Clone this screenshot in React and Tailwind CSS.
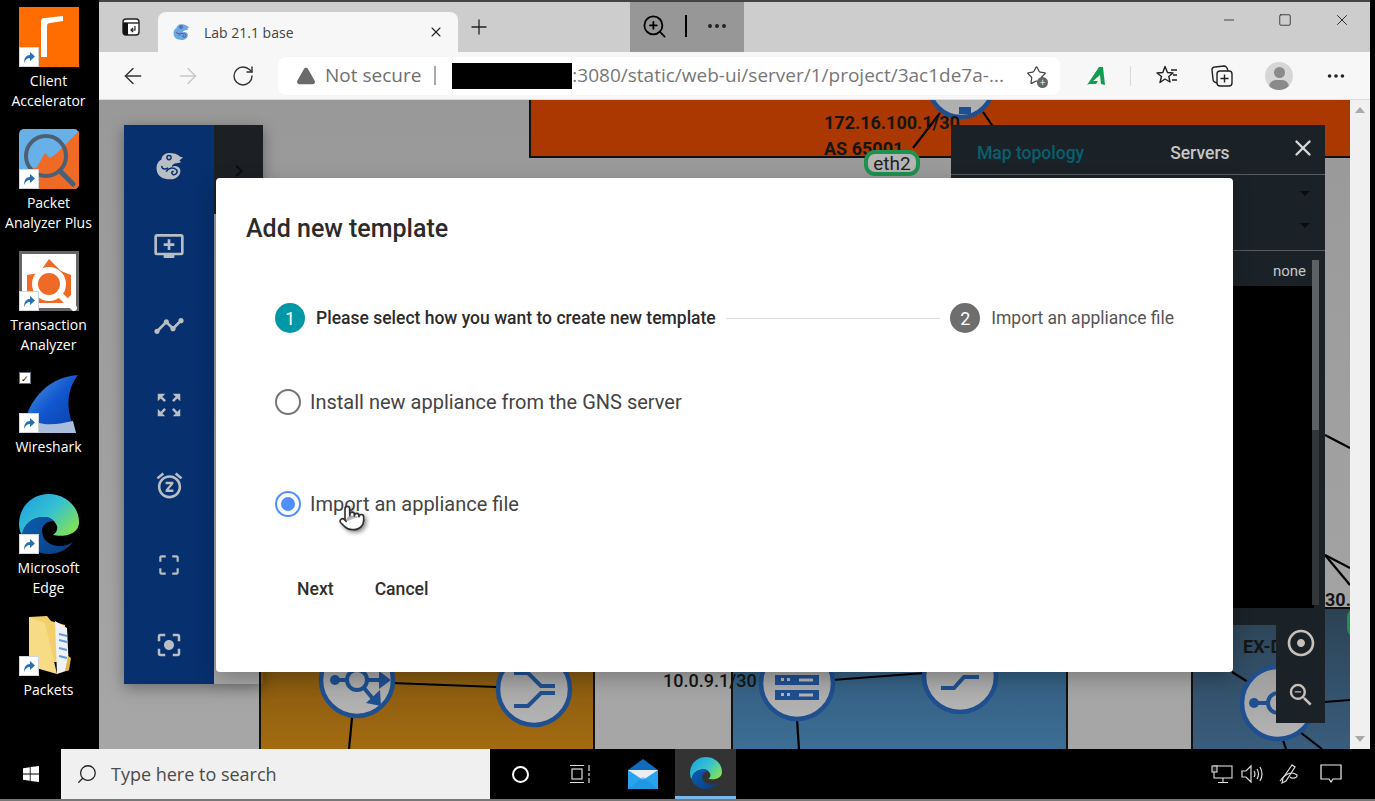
import React from 'react'
import { ArrowLeft, ArrowRight, RotateCw, X, Plus, ZoomIn, MoreHorizontal, Minus, Square, Search, Pointer, TriangleAlert, Star } from 'lucide-react'
import { MdAddToQueue, MdTimeline, MdZoomOutMap, MdSnooze, MdCropFree, MdCenterFocusStrong, MdAdjust, MdZoomOut, MdArrowDropDown, MdChevronRight } from 'react-icons/md'

function ShortcutBadge() {
  return (
    <div className="absolute left-0 bottom-0 w-5 h-5 bg-white border border-gray-300 flex items-center justify-center">
      <svg width="14" height="14" viewBox="0 0 14 14">
        <path d="M2 13 C2 8 4 5 8 5 L8 2 L13 6.5 L8 11 L8 8 C5 8 3 10 2 13 Z" fill="#2a6fb5" />
      </svg>
    </div>
  )
}

function EdgeLogo({ size }) {
  return (
    <svg width={size} height={size} viewBox="0 0 60 60">
      <defs>
        <linearGradient id={`edgeTop${size}`} x1="0" y1="0" x2="1" y2="0.7">
          <stop offset="0" stopColor="#1b9de2" />
          <stop offset="0.55" stopColor="#35c1d1" />
          <stop offset="1" stopColor="#7fe05a" />
        </linearGradient>
        <linearGradient id={`edgeLow${size}`} x1="0" y1="0" x2="1" y2="0.6">
          <stop offset="0" stopColor="#0a5eb0" />
          <stop offset="1" stopColor="#0b3f86" />
        </linearGradient>
      </defs>
      <path d="M30 0 C12 0 0 14 0 30 C0 34 1 38 3 42 C4 30 14 23 25 23 C32 23 36 27 38 32 C39 36 37 39 34 41 C42 43 60 42 60 28 C60 12 46 0 30 0 Z" fill={`url(#edgeTop${size})`} />
      <path d="M3 42 C4 30 14 23 25 23 C30 23 33 25 35 27 C28 27 23 31 23 37 C23 46 31 52 41 52 C46 52 51 50 54 48 C49 55 40 60 30 60 C18 60 7 53 3 42 Z" fill={`url(#edgeLow${size})`} />
    </svg>
  )
}

function Chameleon({ size, body, eye }) {
  return (
    <svg width={size} height={size} viewBox="0 0 32 32">
      <path d="M16 2 C21 2 25 3 28 6 L31 7 L27 10 L29 12 L24 13 C21 13 19 15 19 17 C22 15 27 16 28 20 C29 25 25 29 20 30 C12 31 4 28 3 21 C2 15 4 11 8 9 C8 5 12 2 16 2 Z" fill={body} />
      <circle cx="16" cy="7" r="3" fill={eye} />
      <circle cx="16" cy="7" r="1.4" fill={body} />
      <path d="M13 22 C15 18 20 17 24 20 C26 23 23 26 20 25 C18 24 19 21 21 22" fill="none" stroke={eye} strokeWidth="1.6" />
      <path d="M8 16 C9 20 12 20 15 18" fill="none" stroke={eye} strokeWidth="1.6" />
    </svg>
  )
}

function DesktopIcon({ lines, badge = true, check = false, children, className = 'h-[122px]' }) {
  return (
    <div className={`${className} flex flex-col items-center shrink-0`}>
      <div className="relative w-[60px] h-[60px]">
        {children}
        {badge && <ShortcutBadge />}
        {check && (
          <div className="absolute -left-0 -top-[1px] w-3 h-3 bg-white border border-gray-500 flex items-center justify-center text-[9px] leading-none text-black">✓</div>
        )}
      </div>
      <div className="mt-[4px] text-center text-white text-[14px] leading-5 whitespace-nowrap">
        {lines.map(l => <div key={l}>{l}</div>)}
      </div>
    </div>
  )
}

function Desktop() {
  return (
    <div className="w-[99px] shrink-0 bg-black pt-[7px] pr-[2px] flex flex-col font-['Open_Sans',sans-serif]">
      <DesktopIcon lines={['Client', 'Accelerator']}>
        <div className="w-[60px] h-[60px] bg-[#ff6d00] overflow-hidden">
          <svg width="60" height="60" viewBox="0 0 60 60">
            <path d="M22 50 L22 15 C22 12 23 11 26 11 L44 9 L44 14 L31 16 C29 16 28 17 28 19 L28 50 Z" fill="#fff" />
          </svg>
        </div>
      </DesktopIcon>
      <DesktopIcon lines={['Packet', 'Analyzer Plus']}>
        <svg width="60" height="60" viewBox="0 0 60 60">
          <rect width="60" height="60" rx="5" fill="#68b1e8" />
          <path d="M0 46 L18 38 L26 24 L31 29 L38 24 L60 2 L60 55 Q60 60 55 60 L5 60 Q0 60 0 55 Z" fill="#ee6a25" />
          <circle cx="27" cy="27" r="20" fill="none" stroke="#4d6073" strokeWidth="4" />
          <path d="M41 42 L54 55" stroke="#4d6073" strokeWidth="5" strokeLinecap="round" />
        </svg>
      </DesktopIcon>
      <DesktopIcon lines={['Transaction', 'Analyzer']}>
        <svg width="60" height="60" viewBox="0 0 60 60">
          <rect x="1.5" y="1.5" width="57" height="57" fill="#fff" stroke="#666" strokeWidth="3" />
          <path d="M8 52 L8 24 L20 22 L30 8 L42 20 L52 24 L52 44 L44 52 Z" fill="#ef6a27" />
          <circle cx="30" cy="33" r="14" fill="#ef6a27" stroke="#fff" strokeWidth="6" />
          <path d="M41 44 L55 57" stroke="#fff" strokeWidth="6" strokeLinecap="round" />
        </svg>
      </DesktopIcon>
      <DesktopIcon lines={['Wireshark']} check className="h-[121px]">
        <svg width="60" height="60" viewBox="0 0 60 60">
          <defs>
            <linearGradient id="fin" x1="0" y1="0" x2="1" y2="1">
              <stop offset="0" stopColor="#5aa0ee" />
              <stop offset="0.5" stopColor="#1157cf" />
              <stop offset="1" stopColor="#0a3da5" />
            </linearGradient>
          </defs>
          <path d="M4 60 C6 32 26 4 59 2 C48 16 46 36 56 56 L57 60 Z" fill="url(#fin)" />
          <path d="M20 50 C32 53 44 50 54 48 L57 60 L20 60 Z" fill="#a8bedc" />
        </svg>
      </DesktopIcon>
      <DesktopIcon lines={['Microsoft', 'Edge']}>
        <EdgeLogo size={60} />
      </DesktopIcon>
      <DesktopIcon lines={['Packets']} className="h-[80px]">
        <svg width="60" height="60" viewBox="0 0 60 60">
          <path d="M10 1 L28 0 L32 5 L46 9 L46 46 L10 46 Z" fill="#f2cf6b" />
          <path d="M36 5 L48 12 L50 54 L38 58 Z" fill="#eef2f6" />
          <path d="M40 18 L48 20 M40 24 L48 26 M40 32 L48 34 M40 40 L48 42" stroke="#5f9bd4" strokeWidth="2" />
          <path d="M10 1 L26 7 L38 58 L10 50 Z" fill="#f7dc85" />
          <path d="M49 40 L52 42 L50 54 L46 55 Z" fill="#e2b548" />
        </svg>
      </DesktopIcon>
    </div>
  )
}

function TabStrip() {
  return (
    <div className="h-[50px] bg-[#cdcdcd] flex items-end relative shrink-0">
      <div className="w-[59px] h-full flex items-center justify-center">
        <svg width="18" height="18" viewBox="0 0 18 18" className="ml-1">
          <rect x="1" y="1" width="16" height="16" rx="3" fill="#fff" stroke="#222" strokeWidth="1.4" />
          <path d="M1 5 H17" stroke="#222" strokeWidth="1.4" />
          <path d="M1 5 H6 V17 H4 Q1 17 1 14 Z" fill="#111" />
          <path d="M13 8 V12 H9 M11 10 L9 12 L11 14" fill="none" stroke="#222" strokeWidth="1.2" />
        </svg>
      </div>
      <div className="w-[300px] h-10 bg-[#f7f7f7] rounded-t-lg flex items-center pl-[14px] pr-[14px]">
        <Chameleon size={18} body="#6aa9dd" eye="#5b3fa0" />
        <span className="ml-[14px] text-[#444] text-[14px] font-['Open_Sans',sans-serif]">Lab 21.1 base</span>
        <X size={16} strokeWidth={1.6} className="ml-auto text-[#222]" />
      </div>
      <div className="w-[42px] h-full flex items-center justify-center">
        <Plus size={24} strokeWidth={1.3} className="text-[#222]" />
      </div>
      <div className="absolute left-[531px] top-0 w-[114px] h-full bg-[#979797] flex items-center">
        <ZoomIn size={27} strokeWidth={1.6} className="ml-[11px] -mt-[2px] text-black" />
        <div className="w-[2px] h-[22px] bg-black ml-[17px] -mt-[3px]" />
        <MoreHorizontal size={24} className="ml-[18px] -mt-[3px] text-[#222]" />
      </div>
      <div className="absolute right-0 top-0 h-full flex items-start text-[#222]">
        <Minus size={16} strokeWidth={1.2} className="mt-[10px] mr-[41px]" />
        <Square size={14} strokeWidth={1.4} className="mt-[11px] mr-[41px]" />
        <X size={18} strokeWidth={1.2} className="mt-[9px] mr-[19px]" />
      </div>
    </div>
  )
}

function Toolbar() {
  return (
    <div className="h-[48px] bg-[#f7f7f7] border-b border-[#dcdcdc] flex items-center shrink-0 text-[#333]">
      <div className="w-[51px] flex justify-end pr-[4px]"><ArrowLeft size={26} strokeWidth={1.3} /></div>
      <div className="w-[55px] flex justify-end pr-[4px] text-[#c8c8c8]"><ArrowRight size={26} strokeWidth={1.3} /></div>
      <div className="w-[55px] flex justify-end pr-[5px]"><RotateCw size={24} strokeWidth={1.4} /></div>
      <div className="ml-[18px] w-[782px] h-[38px] bg-white rounded-lg flex items-center pl-[18px] font-['Open_Sans',sans-serif] text-[19px] text-[#777] overflow-hidden">
        <TriangleAlert size={20} fill="#6b6b6b" stroke="#6b6b6b" strokeWidth={1.6} className="shrink-0" />
        <span className="ml-[9px] whitespace-nowrap text-[#6f6f6f]">Not secure</span>
        <div className="ml-[13px] w-[2px] h-[19px] bg-[#aaa] shrink-0" />
        <div className="ml-[16px] w-[120px] h-[26px] bg-black shrink-0" />
        <span className="whitespace-nowrap">:3080/static/web-ui/server/1/project/3ac1de7a-...</span>
        <div className="relative ml-auto mr-[12px] w-[24px] h-[24px] shrink-0 flex items-center justify-center">
          <Star size={21} strokeWidth={1.4} className="text-[#444]" />
          <div className="absolute right-0 bottom-0 w-[11px] h-[11px] rounded-full bg-[#666] text-white text-[10px] leading-[10px] text-center">+</div>
        </div>
      </div>
      <div className="w-[56px] flex justify-end pr-[8px]">
        <svg width="24" height="24" viewBox="0 0 24 24">
          <path d="M3 21 L15 3 L19 3 L21 21 L17 20 L16 11 L9 17 L14 17 L12 20 L5 20 Z" fill="#0f9d4f" />
        </svg>
      </div>
      <div className="w-[1px] h-[20px] bg-[#d8d8d8] ml-[14px]" />
      <div className="w-[48px] flex justify-end">
        <svg width="24" height="24" viewBox="0 0 24 24" fill="none" stroke="#222" strokeWidth="1.4" strokeLinejoin="round">
          <path d="M10 2.5 L12.5 8.5 L18 9 L13.8 12.5 L15 18 L10 15 L5 18.5 L6.5 12.5 L2 9 L7.8 8.5 Z" />
          <path d="M16 6 H22 M18 11 H22 M17 16 H22" />
        </svg>
      </div>
      <div className="w-[55px] flex justify-end">
        <svg width="24" height="24" viewBox="0 0 24 24" fill="none" stroke="#222" strokeWidth="1.4">
          <rect x="7" y="7" width="15" height="15" rx="3" />
          <path d="M7 19 Q3 18 3 15 L2 6 Q2 3 5 3 L14 2 Q17 2 18 7" />
          <path d="M14.5 10.5 V18.5 M10.5 14.5 H18.5" />
        </svg>
      </div>
      <div className="ml-[31px] w-[28px] h-[28px] rounded-full bg-[#d6d6d6] relative overflow-hidden flex justify-center">
        <div className="absolute top-[5px] w-[11px] h-[11px] rounded-full bg-[#8a8a8a]" />
        <div className="absolute top-[18px] w-[20px] h-[14px] rounded-full bg-[#8a8a8a]" />
      </div>
      <MoreHorizontal size={22} className="ml-[32px] text-[#222]" />
    </div>
  )
}

function Node({ cx, cy, r = 36, children }) {
  return (
    <g transform={`translate(${cx} ${cy})`}>
      <circle r={r} fill="url(#nodeFill)" stroke="#1f4f8f" strokeWidth="4.5" />
      {children}
    </g>
  )
}

function Topology() {
  const blue = '#1f4f8f'
  return (
    <svg className="absolute inset-0 w-full h-full" viewBox="99 100 1251 649">
      <defs>
        <linearGradient id="nodeFill" x1="0" y1="0" x2="0" y2="1">
          <stop offset="0" stopColor="#9c9c9c" />
          <stop offset="1" stopColor="#b4b4b4" />
        </linearGradient>
        <linearGradient id="amber" x1="0" y1="0" x2="0" y2="1">
          <stop offset="0" stopColor="#7a5210" />
          <stop offset="1" stopColor="#a86e10" />
        </linearGradient>
        <linearGradient id="sea" x1="0" y1="0" x2="0" y2="1">
          <stop offset="0" stopColor="#2f5878" />
          <stop offset="1" stopColor="#3f7098" />
        </linearGradient>
        <linearGradient id="slate" x1="0" y1="0" x2="0" y2="1">
          <stop offset="0" stopColor="#2c4254" />
          <stop offset="1" stopColor="#3a5f80" />
        </linearGradient>
      </defs>
      <rect x="530" y="90" width="830" height="67" fill="#ab3800" stroke="#111" strokeWidth="2" />
      <rect x="260" y="640" width="334" height="120" fill="url(#amber)" stroke="#111" strokeWidth="2" />
      <rect x="732" y="640" width="335" height="120" fill="url(#sea)" stroke="#111" strokeWidth="2" />
      <rect x="1192" y="608" width="170" height="150" fill="url(#slate)" stroke="#111" strokeWidth="2" />

      <g stroke="#000" strokeWidth="2.2" fill="none">
        <path d="M940 113 L913 148" />
        <path d="M983 112 L994 128" />
        <path d="M392 683 L497 687" />
        <path d="M352 718 L349 749" />
        <path d="M797 719 L799 749" />
        <path d="M832 680 L925 673" />
        <path d="M1312 703 L1350 700" />
        <path d="M1283 740 L1286 749" />
        <path d="M1300 732 L1322 749" />
        <path d="M1325 435 L1350 448" />
        <path d="M1325 555 L1350 568" />
        <path d="M1325 555 L1350 585" />
        <path d="M1232 672 L1248 682" />
      </g>

      <Node cx={961} cy={85} r={32}>
        <rect x="-2" y="22" width="12" height="7" fill={blue} />
      </Node>
      <Node cx={357} cy={680}>
        <circle r="10" fill="none" stroke={blue} strokeWidth="4" />
        <circle cx="-22" cy="0" r="5" fill={blue} />
        <path d="M-22 0 H-10 M10 0 H24 M7 8 L17 20" stroke={blue} strokeWidth="4" fill="none" />
        <path d="M22 -9 L34 0 L22 9 Z M23 10 L24 26 L9 23 Z" fill={blue} />
      </Node>
      <Node cx={534} cy={689}>
        <path d="M-20 -16 H-6 L7 -3 H21 M-20 17 H-6 L7 4 H21" stroke={blue} strokeWidth="4" fill="none" />
      </Node>
      <Node cx={797} cy={683}>
        <g fill={blue}>
          <rect x="-22" y="-22" width="44" height="10" />
          <rect x="-22" y="-8" width="44" height="10" />
          <rect x="-22" y="7" width="44" height="10" />
        </g>
        <g fill="#b4b4b4">
          <rect x="-16" y="-5" width="3" height="3" />
          <rect x="-10" y="-5" width="3" height="3" />
          <rect x="2" y="-4.5" width="14" height="3" />
          <rect x="-16" y="10" width="3" height="3" />
          <rect x="-10" y="10" width="3" height="3" />
          <rect x="2" y="10.5" width="14" height="3" />
        </g>
      </Node>
      <Node cx={960} cy={676}>
        <path d="M-19 12 H-6 L4 1 H19" stroke={blue} strokeWidth="4" fill="none" />
      </Node>
      <Node cx={1278} cy={703}>
        <circle cx="-24" cy="0" r="5" fill={blue} />
        <path d="M-24 0 H-10" stroke={blue} strokeWidth="4" />
        <circle r="10" fill="none" stroke={blue} strokeWidth="4" />
      </Node>

      <g fontFamily="Roboto, sans-serif" fontWeight="700" fontSize="18" fill="#151515">
        <text x="824" y="129">172.16.100.1/30</text>
        <text x="824" y="155">AS 65001</text>
        <text x="663" y="687" fontWeight="500">10.0.9.1/30</text>
        <text x="1325" y="606">30.</text>
        <text x="1243" y="653">EX-D</text>
      </g>
      <rect x="866" y="152" width="52" height="22" rx="9" fill="#b5b5b5" stroke="#1f9150" strokeWidth="4" />
      <text x="892" y="170" textAnchor="middle" fontFamily="Roboto, sans-serif" fontSize="19" fill="#222">eth2</text>
      <rect x="1349" y="610" width="14" height="26" rx="7" fill="#a9a9a9" stroke="#1f9150" strokeWidth="4" />
    </svg>
  )
}

function SideNav() {
  const iconCls = 'text-[#b9bdc4]'
  return (
    <div className="absolute left-[25px] top-[25px] flex items-start shadow-[0_4px_14px_rgba(0,0,0,0.35)]">
      <div className="w-[90px] h-[559px] bg-[#06306e] flex flex-col items-center pt-[26px]">
        <div className="h-[80px] flex justify-center"><Chameleon size={30} body="#b9bdc4" eye="#06306e" /></div>
        <div className="h-[80px] flex justify-center -mt-[1px]"><MdAddToQueue size={32} className={iconCls} /></div>
        <div className="h-[80px] flex justify-center"><MdTimeline size={32} className={iconCls} /></div>
        <div className="h-[80px] flex justify-center"><MdZoomOutMap size={30} className={iconCls} /></div>
        <div className="h-[80px] flex justify-center"><MdSnooze size={31} className={iconCls} /></div>
        <div className="h-[80px] flex justify-center pt-[2px]"><MdCropFree size={26} className={iconCls} /></div>
        <div className="flex justify-center"><MdCenterFocusStrong size={30} className={iconCls} /></div>
      </div>
      <div className="w-[49px] h-[89px] bg-[#1c2025] flex items-center justify-center pt-[2px]">
        <MdChevronRight size={24} className="text-[#0b0d10]" />
      </div>
    </div>
  )
}

function ServerPanel() {
  return (
    <div className="absolute left-[852px] top-[25px] w-[374px] flex flex-col items-end">
      <div className="w-full h-[500px] bg-[#1b2227] flex flex-col text-[#c6c6c6] font-['Roboto',sans-serif]">
        <div className="h-[50px] border-b border-[#565c60] flex items-center shrink-0 text-[17.5px] font-medium">
          <span className="ml-[26px] mt-[8px] text-[#06606f]">Map topology</span>
          <span className="ml-[86px] mt-[8px]">Servers</span>
          <X size={26} strokeWidth={2.2} className="ml-auto mr-[9px] -mt-[3px] text-[#d8d8d8]" />
        </div>
        <div className="h-[76px] border-b border-[#565c60] flex flex-col items-end shrink-0 pr-[8px] pt-[6px] gap-[8px] text-[#0b0e10]">
          <MdArrowDropDown size={24} />
          <MdArrowDropDown size={24} />
        </div>
        <div className="relative flex-1 pl-[282px] pr-[6px]">
          <div className="text-[15px] text-right pr-[13px] h-[35px] pt-[10px] leading-5">none</div>
          <div className="mr-[5px] h-[322px] bg-black" />
          <div className="absolute right-[6px] top-[9px] w-[7px] h-[170px] bg-[#5e6164]" />
          <div className="absolute right-[6px] top-[179px] w-[7px] h-[175px] bg-[#31363a]" />
        </div>
      </div>
      <div className="w-[49px] h-[98px] bg-[#1b2227] flex flex-col items-center pt-[2px] gap-[21px] text-[#c6c0b8]">
        <MdAdjust size={32} />
        <MdZoomOut size={30} />
      </div>
    </div>
  )
}

function Dialog() {
  return (
    <div className="absolute left-[117px] top-[78px] w-[1017px] h-[494px] bg-white rounded-[4px] shadow-[0_6px_20px_rgba(0,0,0,0.25)] px-[30px] pt-[33px] font-['Roboto',sans-serif] text-[#333]">
      <h2 className="text-[25px] leading-9 font-medium text-[#2b2b2b]">Add new template</h2>
      <div className="mt-[55px] flex items-center pl-[29px] pr-[29px] h-[32px]">
        <div className="w-[30px] h-[30px] rounded-full bg-[#0097a7] text-white flex items-center justify-center text-[18px]">1</div>
        <span className="ml-[11px] text-[17.5px] font-medium text-[#2b2b2b] whitespace-nowrap">Please select how you want to create new template</span>
        <div className="flex-1 h-[1px] bg-[#dedede] mx-[10px]" />
        <div className="w-[30px] h-[30px] rounded-full bg-[#6e6e6e] text-white flex items-center justify-center text-[18px]">2</div>
        <span className="ml-[11px] text-[17.5px] text-[#555] whitespace-nowrap">Import an appliance file</span>
      </div>
      <div className="mt-[52px] ml-[29px] flex items-center h-[32px]">
        <div className="w-[26px] h-[26px] rounded-full border-[2.5px] border-[#757575]" />
        <span className="ml-[9px] text-[20px] text-[#444]">Install new appliance from the GNS server</span>
      </div>
      <div className="mt-[70px] ml-[29px] flex items-center h-[32px] relative">
        <div className="w-[26px] h-[26px] rounded-full border-[2.5px] border-[#4d90fe] flex items-center justify-center">
          <div className="w-[14px] h-[14px] rounded-full bg-[#4d90fe]" />
        </div>
        <span className="ml-[9px] text-[20px] text-[#444]">Import an appliance file</span>
        <Pointer size={28} fill="#fff" strokeWidth={1.4} className="absolute left-[63px] top-[16px] text-[#333] drop-shadow-[2px_2px_2px_rgba(0,0,0,0.45)]" />
      </div>
      <div className="mt-[56px] ml-[51px] flex items-center gap-[41px] text-[17.6px] font-medium text-[#2f2f2f]">
        <span>Next</span>
        <span>Cancel</span>
      </div>
    </div>
  )
}

function PageScrollbar() {
  return (
    <div className="w-[20px] shrink-0 bg-[#f0f0f0] flex flex-col items-center justify-between py-[7px]">
      <div className="w-0 h-0 border-x-[5px] border-x-transparent border-b-[6px] border-b-[#a8a8a8]" />
      <div className="w-0 h-0 border-x-[5px] border-x-transparent border-t-[6px] border-t-[#a8a8a8]" />
    </div>
  )
}

function Taskbar() {
  return (
    <div className="h-[50px] bg-black flex items-center shrink-0 text-white">
      <div className="w-[61px] flex justify-center">
        <svg width="16" height="16" viewBox="0 0 16 16" fill="#fff">
          <path d="M0 2.2 L6.8 1.2 V7.5 H0 Z M7.6 1.1 L16 0 V7.5 H7.6 Z M0 8.4 H6.8 V14.8 L0 13.8 Z M7.6 8.4 H16 V16 L7.6 14.9 Z" />
        </svg>
      </div>
      <div className="w-[429px] h-full bg-[#f0f0f0] flex items-center pl-[15px] text-[#4a4a4a] font-['Open_Sans',sans-serif] text-[18px]">
        <Search size={22} strokeWidth={1.4} className="-scale-x-100 text-[#222]" />
        <span className="ml-[13px]">Type here to search</span>
      </div>
      <div className="w-[60px] flex justify-center">
        <div className="w-[17px] h-[17px] rounded-full border-2 border-white" />
      </div>
      <div className="w-[60px] flex justify-center">
        <svg width="22" height="20" viewBox="0 0 22 20" fill="none" stroke="#ddd" strokeWidth="1.2">
          <path d="M1 1.5 H15 M1 18.5 H15" />
          <rect x="3" y="5" width="10" height="10" />
          <path d="M20 1 V7 M20 9 V12 M20 14 V19" />
        </svg>
      </div>
      <div className="w-[65px] flex justify-center">
        <svg width="32" height="30" viewBox="0 0 32 30">
          <path d="M1 11 L16 0 L31 11 L31 12 L1 12 Z" fill="#0f6cbd" />
          <rect x="1" y="11" width="30" height="19" fill="#2aa3ee" />
          <path d="M1 11 H31 L16 21 Z" fill="#e9eef3" />
          <path d="M1 30 L16 18 L31 30 Z" fill="#1b8fdc" opacity="0.6" />
        </svg>
      </div>
      <div className="w-[61px] h-full bg-[#333] border-b-[3px] border-[#76b9ed] flex items-center justify-center">
        <EdgeLogo size={32} />
      </div>
      <div className="ml-auto flex items-center h-full">
        <svg width="22" height="20" viewBox="0 0 22 20" fill="none" stroke="#ddd" strokeWidth="1.1" className="mr-[8px]">
          <rect x="3" y="2" width="18" height="12" />
          <rect x="1" y="2" width="5" height="6" fill="#222" />
          <path d="M12 14 V18 M7 18.5 H17" />
        </svg>
        <svg width="22" height="20" viewBox="0 0 22 20" fill="none" stroke="#ddd" strokeWidth="1.2" className="mr-[15px]">
          <path d="M1 7 H5 L10 2 V18 L5 13 H1 Z" />
          <path d="M13 7 Q15 10 13 13 M16 5 Q19 10 16 15 M19 3 Q23 10 19 17" />
        </svg>
        <svg width="22" height="22" viewBox="0 0 22 22" fill="none" stroke="#ddd" strokeWidth="1.2" className="mr-[20px]">
          <path d="M14 2 L17 4 L8 18 L4 20 L5 15 Z" />
          <path d="M2 18 C8 10 14 8 19 12 C20 15 14 16 12 14" />
        </svg>
        <svg width="22" height="20" viewBox="0 0 22 20" fill="none" stroke="#eee" strokeWidth="1.2" className="mr-[33px]">
          <path d="M1 1 H21 V15 H13 L11 18 L9 15 H1 Z" />
        </svg>
      </div>
    </div>
  )
}

export default function App() {
  return (
    <div className="w-[1375px] h-[801px] bg-black flex flex-col overflow-hidden font-['Roboto',sans-serif]">
      <div className="h-[749px] flex shrink-0">
        <Desktop />
        <div className="w-[1271px] flex flex-col pt-[2px] bg-[#444]">
          <TabStrip />
          <Toolbar />
          <div className="flex-1 flex min-h-0">
            <div className="relative flex-1 bg-gradient-to-b from-[#999999] to-[#a6a6a6]">
              <Topology />
              <SideNav />
              <ServerPanel />
              <Dialog />
            </div>
            <PageScrollbar />
          </div>
        </div>
      </div>
      <Taskbar />
      <div className="h-[2px] bg-[#777]" />
    </div>
  )
}
